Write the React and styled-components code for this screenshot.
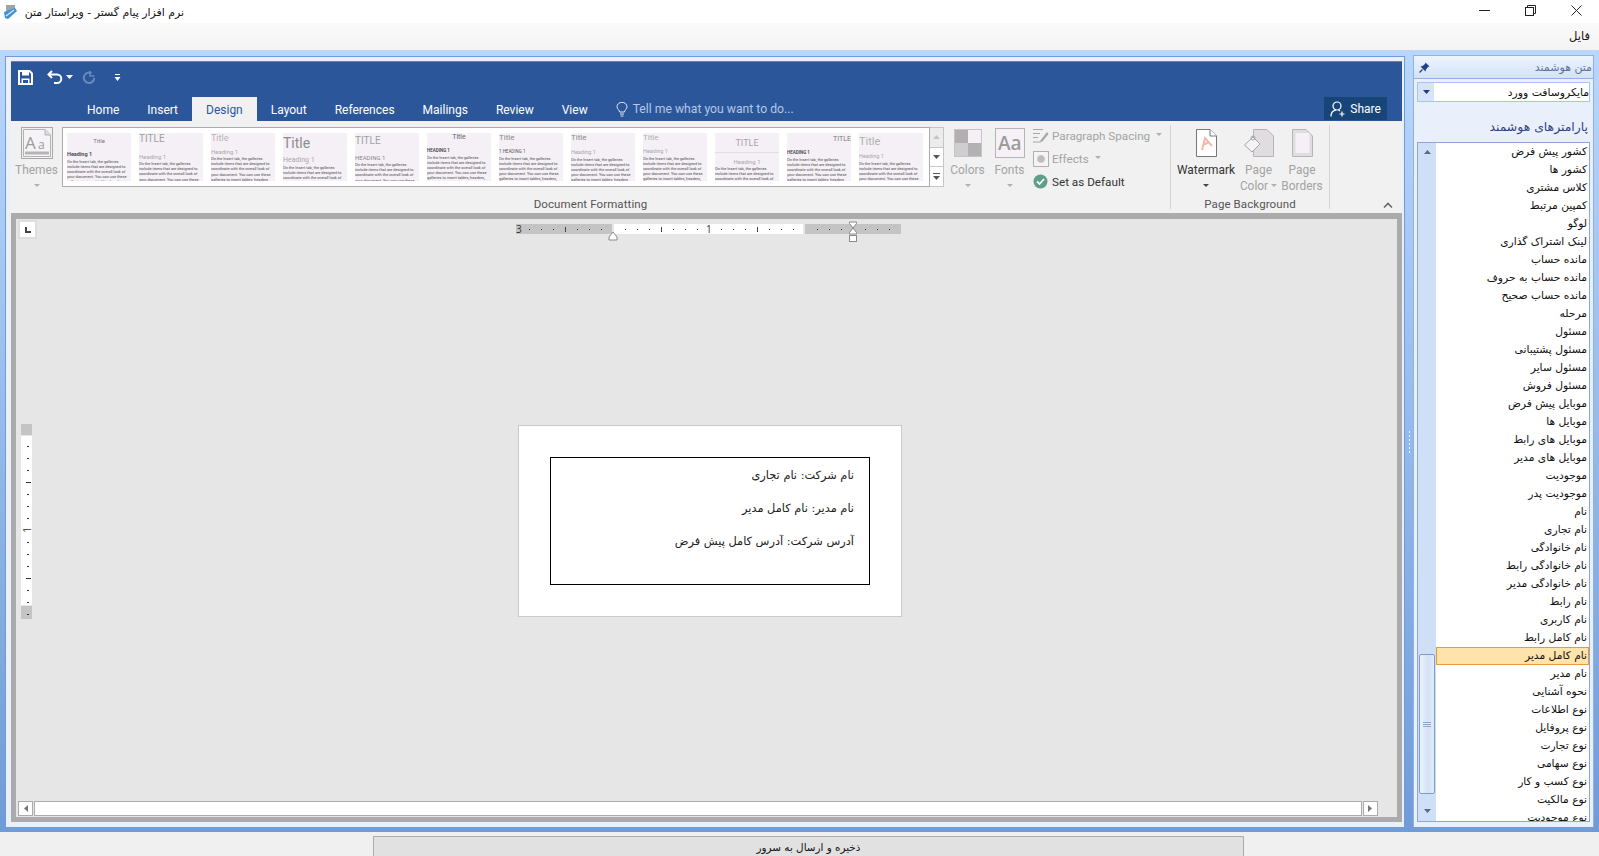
import React from 'react';
import styled, { createGlobalStyle } from 'styled-components';

const GlobalStyle = createGlobalStyle`
  html, body {
    margin: 0;
    padding: 0;
    height: 100%;
    overflow: hidden;
    background: #f0f0f0;
  }
  * { box-sizing: border-box; }
`;

const persian = `"DejaVu Sans", "Noto Sans", sans-serif`;
const ribbonFont = `Roboto, "Open Sans", sans-serif`;

const Shell = styled.div`
  width: 1599px;
  height: 856px;
  display: flex;
  flex-direction: column;
  overflow: hidden;
  font-family: ${persian};
`;

const TitleBar = styled.div`
  height: 23px;
  flex: none;
  background: #fff;
  display: flex;
  align-items: center;
  padding-left: 3px;
`;

const TitleText = styled.div`
  direction: rtl;
  font-size: 10.9px;
  padding-top: 1px;
  color: #111;
  margin-left: 6px;
  width: 160px;
  white-space: nowrap;
`;

const WindowButtons = styled.div`
  margin-left: auto;
  display: flex;
  height: 100%;
`;

const WindowButton = styled.div`
  width: 46px;
  display: flex;
  align-items: center;
  justify-content: center;
  padding-bottom: 2px;
`;

const MenuBar = styled.div`
  height: 27px;
  flex: none;
  background: linear-gradient(#fafafa, #f4f4f4);
  direction: rtl;
  font-size: 11.5px;
  color: #111;
  padding: 6px 9px 0 0;
`;

const Workspace = styled.div`
  height: 782px;
  flex: none;
  display: flex;
  padding: 6px 5px 5px 5px;
  background: linear-gradient(#b9d7fd, #6f9bd8);
`;

const EditorPanel = styled.div`
  width: 1401px;
  background: #e9f0fb;
  border: 1px solid #6f9bd8;
  border-bottom: none;
  padding: 4px 2px 5px 5px;
  display: flex;
  flex-direction: column;
`;

const Splitter = styled.div`
  width: 8px;
  display: flex;
  flex-direction: column;
  align-items: center;
  justify-content: center;
  gap: 2px;
`;

const GripDot = styled.span`
  width: 1px;
  height: 2px;
  background: #eaf2fd;
`;

const RibbonTop = styled.div`
  height: 60px;
  flex: none;
  background: #2b579a;
  border-top: 1px solid #7a7f8a;
  display: flex;
  flex-direction: column;
`;

const QuickAccess = styled.div`
  height: 35px;
  flex: none;
  display: flex;
  align-items: center;
  padding: 0 0 4px 7px;
`;

const QuickIcon = styled.div`
  display: flex;
  margin-left: ${(p) => p.$gap || 0}px;
`;

const TabRow = styled.div`
  flex: 1;
  display: flex;
  align-items: stretch;
  padding-left: 62px;
  font-family: ${ribbonFont};
`;

const Tab = styled.div`
  padding: 1px 14px 0;
  display: flex;
  align-items: center;
  font-size: 12px;
  color: ${(p) => (p.$active ? '#2b579a' : '#fff')};
  background: ${(p) => (p.$active ? '#f1f1f1' : 'transparent')};
`;

const TellMe = styled.div`
  display: flex;
  align-items: center;
  gap: 5px;
  margin-left: 14px;
  font-size: 12.2px;
  color: #b4c7e4;
`;

const ShareButton = styled.div`
  margin-left: auto;
  margin-right: 15px;
  width: 63px;
  height: 23px;
  align-self: flex-start;
  background: #174578;
  color: #fff;
  font-size: 12px;
  display: flex;
  align-items: center;
  justify-content: center;
  gap: 4px;
`;

const Ribbon = styled.div`
  height: 92px;
  flex: none;
  background: #f1f1f1;
  display: flex;
  font-family: ${ribbonFont};
`;

const Group = styled.div`
  width: ${(p) => p.$width}px;
  border-right: 1px solid #d4d4d4;
  margin: 4px 0 4px;
  display: flex;
  flex-direction: column;
`;

const GroupRow = styled.div`
  flex: 1;
  display: flex;
  padding-top: 2px;
  padding-left: ${(p) => p.$left || 0}px;
`;

const GroupLabel = styled.div`
  height: 15px;
  padding-top: 3px;
  line-height: 15px;
  text-align: center;
  font-size: 11.5px;
  letter-spacing: 0.1px;
  color: #555;
`;

const LargeButton = styled.div`
  width: ${(p) => p.$width}px;
  display: flex;
  flex-direction: column;
  align-items: center;
  color: ${(p) => (p.$on ? '#333' : '#a3a3a3')};
  font-size: 11.9px;
  line-height: 16px;
  text-align: center;
`;

const IconSlot = styled.div`
  height: 32px;
  margin-bottom: 3px;
  display: flex;
  align-items: center;
`;

const Caret = styled.span`
  width: 0;
  height: 0;
  margin-top: 6px;
  border-left: 3px solid transparent;
  border-right: 3px solid transparent;
  border-top: 3px solid ${(p) => (p.$on ? '#444' : '#b0b0b0')};
`;

const InlineCaret = styled(Caret)`
  display: inline-block;
  margin: 0 0 2px 3px;
  vertical-align: middle;
`;

const Gallery = styled.div`
  width: 868px;
  height: 60px;
  background: #fff;
  border: 1px solid #ababab;
  display: flex;
  gap: 8px;
  padding: 5px 0 0 4px;
`;

const Thumb = styled.div`
  width: 64px;
  height: 48px;
  flex: none;
  background: #f5f0f6;
  overflow: hidden;
  color: #9a9a9a;
`;

const ThumbTitle = styled.div`
  font-size: ${(p) => p.$size}px;
  line-height: ${(p) => p.$size + 2}px;
  margin-top: ${(p) => p.$top || 0}px;
  text-align: ${(p) => p.$align || 'left'};
  color: ${(p) => p.$color || '#a0a0a0'};
  border-bottom: ${(p) => (p.$rule ? '1px solid #e2dce4' : 'none')};
  padding-bottom: ${(p) => (p.$rule ? 3 : 0)}px;
  white-space: nowrap;
`;

const ThumbHeading = styled.div`
  font-size: ${(p) => p.$size}px;
  line-height: ${(p) => p.$size + 1}px;
  margin: ${(p) => p.$gap}px 0 1px;
  text-align: ${(p) => p.$align || 'left'};
  color: ${(p) => p.$color || '#a8a8a8'};
  font-weight: ${(p) => (p.$bold ? 600 : 400)};
  white-space: nowrap;
`;

const ThumbBody = styled.div`
  font-size: 3.9px;
  line-height: 5.2px;
  color: #4a4a4a;
`;

const GalleryScroll = styled.div`
  width: 14px;
  height: 60px;
  display: flex;
  flex-direction: column;
  border: 1px solid #c6c6c6;
  border-left: none;
`;

const GalleryStep = styled.div`
  flex: 1;
  background: ${(p) => (p.$off ? '#ececec' : '#fff')};
  border-bottom: ${(p) => (p.$last ? 'none' : '1px solid #c6c6c6')};
  display: flex;
  align-items: center;
  justify-content: center;
`;

const OptionColumn = styled.div`
  margin: -3px 0 0 4px;
  display: flex;
  flex-direction: column;
`;

const OptionRow = styled.div`
  height: 23px;
  display: flex;
  align-items: center;
  gap: 3px;
  font-size: 11.7px;
  white-space: nowrap;
  color: ${(p) => (p.$on ? '#333' : '#a3a3a3')};
`;

const OptionIcon = styled.span`
  width: 17px;
  display: flex;
  justify-content: center;
`;

const CollapseSlot = styled.div`
  flex: 1;
  display: flex;
  justify-content: flex-end;
  align-items: flex-end;
  padding: 0 9px 4px 0;
`;

const DocumentFrame = styled.div`
  flex: 1;
  border: 5px solid #ababab;
  border-top-width: 6px;
  background: #e6e6e6;
  display: flex;
  flex-direction: column;
`;

const RulerRow = styled.div`
  height: 30px;
  flex: none;
  display: flex;
  padding: 2px 0 0 4px;
`;

const TabSelector = styled.div`
  width: 15px;
  height: 15px;
  margin-top: 1px;
  background: #fff;
  box-shadow: 0 0 0 2px #dedede;
  display: flex;
  align-items: center;
  justify-content: center;
`;

const HorizontalRuler = styled.svg`
  margin-left: 481px;
  display: block;
`;

const CanvasRow = styled.div`
  flex: 1;
  display: flex;
  align-items: flex-start;
  padding: 175px 0 0 5px;
`;

const VerticalRuler = styled.svg`
  display: block;
  flex: none;
`;

const Page = styled.div`
  width: 384px;
  height: 192px;
  margin: 1px 0 0 486px;
  background: #fff;
  border: 1px solid #cacaca;
  padding: 31px 0 0 31px;
`;

const TextFrame = styled.div`
  width: 320px;
  height: 128px;
  border: 1px solid #000;
  direction: rtl;
  padding: 1px 15px 0 0;
  font-size: 11.35px;
  line-height: 33px;
  color: #222;
`;

const ScrollRow = styled.div`
  height: 15px;
  flex: none;
  margin-bottom: 1px;
  display: flex;
  gap: 1px;
  padding: 0 19px 0 2px;
`;

const ScrollArrow = styled.div`
  width: 15px;
  background: #fff;
  border: 1px solid #ababab;
  display: flex;
  align-items: center;
  justify-content: center;
`;

const ScrollTrack = styled.div`
  flex: 1;
  background: #fff;
  border: 1px solid #ababab;
`;

const SidePanel = styled.div`
  width: 181px;
  margin-top: -1px;
  background: #e9f0fb;
  border: 1px solid #8fb1e3;
  border-bottom: none;
  display: flex;
  flex-direction: column;
  padding-bottom: 5px;
`;

const SideHeader = styled.div`
  height: 23px;
  flex: none;
  background: linear-gradient(#eef4fd, #d3e2f7);
  border-bottom: 1px solid #8fb1e3;
  display: flex;
  align-items: center;
  justify-content: space-between;
  padding: 0 1px 0 5px;
  font-size: 11px;
  color: #5d6f9c;
`;

const Combo = styled.div`
  height: 20px;
  flex: none;
  margin: 3px 3px 0;
  background: #fff;
  border: 1px solid #a9c4ec;
  display: flex;
  align-items: center;
`;

const ComboButton = styled.div`
  width: 16px;
  height: 100%;
  background: #d6e4f8;
  display: flex;
  align-items: center;
  justify-content: center;
`;

const ComboText = styled.div`
  flex: 1;
  direction: rtl;
  font-size: 10.8px;
  color: #111;
`;

const ParamsTitle = styled.div`
  direction: rtl;
  height: 40px;
  flex: none;
  padding: 17px 5px 0 0;
  font-size: 12.4px;
  line-height: 16px;
  color: #2f3f86;
`;

const ListBox = styled.div`
  flex: 1;
  min-height: 0;
  margin: 0 3px;
  background: #fff;
  border: 1px solid #8ba7d2;
  display: flex;
  overflow: hidden;
`;

const ListScroll = styled.div`
  width: 18px;
  flex: none;
  background: #cfe0f6;
  display: flex;
  flex-direction: column;
  align-items: center;
`;

const ListArrow = styled.div`
  height: 18px;
  margin-top: ${(p) => p.$top || 0}px;
  display: flex;
  align-items: center;
  justify-content: center;
`;

const ListThumb = styled.div`
  width: 16px;
  height: 140px;
  flex: none;
  margin-top: ${(p) => p.$top}px;
  background: linear-gradient(90deg, #eaf2fd, #d3e2f7 60%, #e3edfb);
  border: 1px solid #7f9cc9;
  border-radius: 2px;
  display: flex;
  flex-direction: column;
  gap: 1px;
  align-items: center;
  justify-content: center;
`;

const ThumbLine = styled.span`
  width: 8px;
  height: 1px;
  background: #8ea8d0;
`;

const ListItems = styled.div`
  flex: 1;
  direction: rtl;
`;

const ListItem = styled.div`
  height: 18px;
  line-height: 17px;
  padding-right: 2px;
  font-size: 10.7px;
  white-space: nowrap;
  color: #111;
  background: ${(p) => (p.$selected ? '#fee3ab' : 'transparent')};
  box-shadow: ${(p) => (p.$selected ? 'inset 0 0 0 1px #f29536' : 'none')};
`;

const Footer = styled.div`
  height: 24px;
  flex: none;
  background: #f0f0f0;
  padding: 4px 0 0 373px;
`;

const SaveButton = styled.div`
  width: 871px;
  height: 20px;
  background: #e1e1e1;
  border: 1px solid #adadad;
  border-bottom: none;
  direction: rtl;
  text-align: center;
  font-size: 10.4px;
  line-height: 20px;
  color: #111;
`;

const SMART_PARAMS = [
  'کشور پیش فرض', 'کشور ها', 'کلاس مشتری', 'کمپین مرتبط', 'لوگو',
  'لینک اشتراک گذاری', 'مانده حساب', 'مانده حساب به حروف', 'مانده حساب صحیح',
  'مرحله', 'مسئول', 'مسئول پشتیبانی', 'مسئول سایر', 'مسئول فروش',
  'موبایل پیش فرض', 'موبایل ها', 'موبایل های رابط', 'موبایل های مدیر',
  'موجودیت', 'موجودیت پدر', 'نام', 'نام تجاری', 'نام خانوادگی',
  'نام خانوادگی رابط', 'نام خانوادگی مدیر', 'نام رابط', 'نام کاربری',
  'نام کامل رابط', 'نام کامل مدیر', 'نام مدیر', 'نحوه آشنایی', 'نوع اطلاعات',
  'نوع پروفایل', 'نوع تجارت', 'نوع سهامی', 'نوع کسب و کار', 'نوع مالکیت',
  'نوع موجودیت',
];

const TABS = ['Home', 'Insert', 'Design', 'Layout', 'References', 'Mailings', 'Review', 'View'];

const SAMPLE =
  'On the Insert tab, the galleries include items that are designed to coordinate with the overall look of your document. You can use these galleries to insert tables, headers, footers, lists, cover pages, and other document building blocks.';

const THEMES = [
  { title: 'Title', size: 6, align: 'center', top: 4, color: '#777', head: 'Heading 1', hSize: 5.5, hGap: 6, hColor: '#444', hBold: true },
  { title: 'TITLE', size: 10, head: 'Heading 1', hSize: 6, hGap: 8 },
  { title: 'Title', size: 9, color: '#b5b5b5', head: 'Heading 1', hSize: 6, hGap: 4 },
  { title: 'Title', size: 14, color: '#8c8c8c', top: 2, head: 'Heading 1', hSize: 7, hGap: 5 },
  { title: 'TITLE', size: 10, top: 2, head: 'HEADING 1', hSize: 6, hGap: 7, hColor: '#888' },
  { title: 'Title', size: 7, align: 'center', color: '#666', head: 'HEADING 1', hSize: 4.5, hGap: 6, hColor: '#444', hBold: true },
  { title: 'Title', size: 8, color: '#888', head: '1   HEADING 1', hSize: 4.5, hGap: 6, hColor: '#555' },
  { title: 'Title', size: 8, color: '#888', head: 'Heading 1', hSize: 5.5, hGap: 6 },
  { title: 'Title', size: 8, color: '#b0b0b0', head: 'Heading 1', hSize: 5.5, hGap: 5 },
  { title: 'TITLE', size: 9, align: 'center', color: '#a5a5a5', top: 5, rule: true, head: 'Heading 1', hSize: 6, hGap: 5, hAlign: 'center' },
  { title: 'TITLE', size: 7, align: 'right', color: '#777', top: 2, head: 'HEADING 1', hSize: 4.5, hGap: 6, hColor: '#444', hBold: true },
  { title: 'Title', size: 11, color: '#b0b0b0', top: 2, head: 'Heading 1', hSize: 5.5, hGap: 5 },
];

const ThemeThumb = ({ item }) => (
  <Thumb>
    <ThumbTitle $size={item.size} $top={item.top} $align={item.align} $color={item.color} $rule={item.rule}>
      {item.title}
    </ThumbTitle>
    <ThumbHeading
      $size={item.hSize}
      $gap={item.hGap}
      $align={item.hAlign}
      $color={item.hColor}
      $bold={item.hBold}
    >
      {item.head}
    </ThumbHeading>
    <ThumbBody>{SAMPLE}</ThumbBody>
  </Thumb>
);

const Tri = ({ dir = 'down', color = '#555', size = 7 }) => {
  const pts = {
    down: '0,1 7,1 3.5,5',
    up: '0,5 7,5 3.5,1',
    left: '6,0 6,7 2,3.5',
    right: '1,0 1,7 5,3.5',
  };
  return (
    <svg width={size} height={size} viewBox="0 0 7 7">
      <polygon points={pts[dir]} fill={color} />
    </svg>
  );
};

const AppIcon = () => (
  <svg width="15" height="16" viewBox="0 0 15 16">
    <rect x="3" y="1" width="9" height="6" fill="#9aa7a5" />
    <path d="M1 8 L12 4 L14 7 L5 15 L2 14 Z" fill="#3f8fd6" />
    <path d="M3 12 L11 6" stroke="#cfe8fb" strokeWidth="1.5" />
  </svg>
);

const SaveIcon = () => (
  <svg width="15" height="15" viewBox="0 0 15 15">
    <path d="M1 1 H11.5 L14 3.5 V14 H1 Z" fill="none" stroke="#fff" strokeWidth="2" />
    <rect x="4" y="2" width="7" height="3.5" fill="#fff" />
    <rect x="3.5" y="8.5" width="8" height="5" fill="#fff" />
    <rect x="5" y="10" width="5" height="3" fill="#2b579a" />
  </svg>
);

const UndoIcon = () => (
  <svg width="16" height="15" viewBox="0 0 16 15">
    <path d="M5 1 L1.5 4.5 L5 8" fill="none" stroke="#fff" strokeWidth="2" />
    <path d="M2 4.5 H10 A4 4 0 0 1 10 13 H7" fill="none" stroke="#fff" strokeWidth="2" />
  </svg>
);

const RedoIcon = () => (
  <svg width="14" height="14" viewBox="0 0 14 14">
    <path d="M9.5 2.2 A5.2 5.2 0 1 0 12.2 7" fill="none" stroke="#6b8bbb" strokeWidth="2" />
    <path d="M8 0 V5 H12.5" fill="none" stroke="#6b8bbb" strokeWidth="1.4" />
  </svg>
);

const CustomizeIcon = () => (
  <svg width="7" height="8" viewBox="0 0 7 8">
    <rect x="1" y="0" width="5" height="1" fill="#fff" />
    <polygon points="0.5,3 6.5,3 3.5,7" fill="#fff" />
  </svg>
);

const BulbIcon = () => (
  <svg width="12" height="15" viewBox="0 0 12 15">
    <path d="M3.5 10 C3.5 8 1 7 1 4.8 A5 4.5 0 0 1 11 4.8 C11 7 8.5 8 8.5 10 Z" fill="none" stroke="#dfe7f3" strokeWidth="1" />
    <path d="M4 12 H8 M4.6 14 H7.4" stroke="#dfe7f3" strokeWidth="1" />
  </svg>
);

const ShareIcon = () => (
  <svg width="16" height="16" viewBox="0 0 16 16">
    <circle cx="7" cy="5" r="4" fill="none" stroke="#fff" strokeWidth="1.2" />
    <path d="M1 15.5 C1 11.5 3.5 9.5 6 9.2 M8.5 9.2 L10 10" fill="none" stroke="#fff" strokeWidth="1.2" />
    <path d="M12 10.5 V15.5 M9.5 13 H14.5" stroke="#fff" strokeWidth="1.2" />
  </svg>
);

const ThemesIcon = () => (
  <svg width="32" height="32" viewBox="0 0 32 32">
    <rect x="0.5" y="0.5" width="31" height="31" fill="none" stroke="#a9a9a9" />
    <path d="M2.5 2.5 H24 L29.5 8 V29.5 H2.5 Z" fill="#f6f3f7" stroke="#b3b3b3" />
    <path d="M24 2.5 V8 H29.5" fill="#dcdcdc" stroke="#b3b3b3" />
    <text x="4" y="22" fontFamily="Open Sans, sans-serif" fontSize="17" fill="#9b9b9b">A</text>
    <text x="17" y="22" fontFamily="Open Sans, sans-serif" fontSize="12" fill="#9b9b9b">a</text>
    <rect x="4" y="24.5" width="24" height="3" fill="#b5b5b5" />
  </svg>
);

const ColorsIcon = () => (
  <svg width="28" height="28" viewBox="0 0 28 28">
    <rect width="28" height="28" fill="#fff" />
    <rect x="0.5" y="0.5" width="13.5" height="13.5" fill="#b2aeb2" />
    <rect x="14" y="0.5" width="13.5" height="13.5" fill="#f5f0f6" />
    <rect x="0.5" y="14" width="13.5" height="13.5" fill="#d0cdd0" />
    <rect x="14" y="14" width="13.5" height="13.5" fill="#b2b2b2" />
    <rect x="0.5" y="0.5" width="27" height="27" fill="none" stroke="#c4c4c4" />
  </svg>
);

const FontsIcon = () => (
  <svg width="30" height="30" viewBox="0 0 30 30">
    <rect x="0.5" y="0.5" width="29" height="29" fill="#f6f1f7" stroke="#b5b5b5" />
    <text x="3" y="22" fontFamily="Open Sans, sans-serif" fontSize="19" fontWeight="600" fill="#9c9c9c">Aa</text>
  </svg>
);

const SpacingIcon = () => (
  <svg width="17" height="16" viewBox="0 0 17 16">
    <path d="M1 1.5 H11 M1 5.5 H8 M1 9.5 H6 M1 14 H9" stroke="#a8a8a8" strokeWidth="1" />
    <path d="M8 13 L15 4 L16.5 6 L10 14 Z" fill="#a8a8a8" />
  </svg>
);

const EffectsIcon = () => (
  <svg width="16" height="16" viewBox="0 0 16 16">
    <rect x="0.5" y="0.5" width="15" height="15" fill="#f6f3f7" stroke="#b0b0b0" />
    <circle cx="8" cy="8" r="3.8" fill="#bdbdbd" />
  </svg>
);

const CheckIcon = () => (
  <svg width="15" height="15" viewBox="0 0 15 15">
    <circle cx="7.5" cy="7.5" r="7" fill="#5f9f8a" />
    <path d="M4 7.5 L6.5 10 L11 5" fill="none" stroke="#fff" strokeWidth="1.8" />
  </svg>
);

const WatermarkIcon = () => (
  <svg width="21" height="28" viewBox="0 0 21 28">
    <path d="M0.5 0.5 H14 L20.5 7 V27.5 H0.5 Z" fill="#fff" stroke="#777" />
    <path d="M14 0.5 V7 H20.5" fill="#fff" stroke="#777" />
    <path d="M6 21 L9 9 L16 17 M7.5 15.5 L12.5 13.5" fill="none" stroke="#f0b9ab" strokeWidth="2" />
  </svg>
);

const PageColorIcon = () => (
  <svg width="30" height="28" viewBox="0 0 30 28">
    <path d="M9.5 0.5 H23 L29.5 7 V27.5 H9.5 Z" fill="#e0dce0" stroke="#b5b5b5" />
    <path d="M0.5 16 L9 8 L16 15 L8 23 Z" fill="#f6f3f7" stroke="#a5a5a5" />
    <circle cx="9" cy="9" r="2" fill="none" stroke="#a5a5a5" />
  </svg>
);

const PageBordersIcon = () => (
  <svg width="21" height="28" viewBox="0 0 21 28">
    <path d="M0.5 0.5 H14 L20.5 7 V27.5 H0.5 Z" fill="#e0dce0" stroke="#b5b5b5" />
    <rect x="3.5" y="4" width="14" height="20" fill="#f5f0f6" />
  </svg>
);

const ChevronUp = () => (
  <svg width="10" height="7" viewBox="0 0 10 7">
    <path d="M1 5.5 L5 1.5 L9 5.5" fill="none" stroke="#666" strokeWidth="1.6" />
  </svg>
);

const PinIcon = () => (
  <svg width="11" height="11" viewBox="0 0 11 11">
    <path d="M6.5 0.5 L10.5 4.5 L9 5 L7 7.5 L6.5 9.5 L1.5 4.5 L3.5 4 L6 2 Z" fill="#233f86" />
    <path d="M3.5 7.5 L0.5 10.5" stroke="#233f86" strokeWidth="1.2" />
  </svg>
);

// horizontal ruler: ticks every 12px, long ones every 96px
const RulerH = () => {
  const ticks = [];
  for (let x = 13; x < 380; x += 12) {
    const abs = x + 516;
    if (abs === 517 || abs === 709 || abs === 613 || abs === 805 || abs === 853) continue;
    const long = abs === 565 || abs === 661 || abs === 757;
    ticks.push(
      <rect key={x} x={x} y={long ? 6 : 8} width="1" height={long ? 5 : 1} fill={long ? '#444' : '#333'} />
    );
  }
  return (
    <HorizontalRuler width="386" height="22" viewBox="0 0 386 22">
      <rect x="0" y="3" width="96" height="10" fill="#c4c4c4" />
      <rect x="98" y="3" width="189" height="10" fill="#fff" />
      <rect x="289" y="3" width="96" height="10" fill="#c4c4c4" />
      {ticks}
      <text x="0" y="12" fontFamily="Open Sans, sans-serif" fontSize="10" fill="#333">3</text>
      <text x="190" y="12" fontFamily="Open Sans, sans-serif" fontSize="10" fill="#333">1</text>
      <path d="M93 16 L97 11 L101 16 V19 H93 Z" fill="#fff" stroke="#8a8a8a" />
      <path d="M333.5 1 H340.5 V2.5 L337 7 L340.5 11.5 V13 H333.5 V11.5 L337 7 L333.5 2.5 Z" fill="#fff" stroke="#8a8a8a" />
      <rect x="333.5" y="14.5" width="7" height="6" fill="#fff" stroke="#8a8a8a" />
    </HorizontalRuler>
  );
};

const RulerV = () => {
  const ticks = [];
  for (let y = 22; y < 195; y += 12) {
    const abs = y + 424;
    if (abs === 530) continue;
    const long = abs === 482 || abs === 578;
    ticks.push(
      <rect key={y} x={long ? 5 : 6} y={y} width={long ? 5 : 2} height="1" fill="#333" />
    );
  }
  return (
    <VerticalRuler width="11" height="195" viewBox="0 0 11 195">
      <rect x="0" y="0" width="11" height="11" fill="#c4c4c4" />
      <rect x="0" y="12" width="11" height="169" fill="#fff" />
      <rect x="0" y="182" width="11" height="13" fill="#c4c4c4" />
      {ticks}
      <text transform="translate(10 106) rotate(-90)" textAnchor="middle" fontFamily="Open Sans, sans-serif" fontSize="10" fill="#333">1</text>
    </VerticalRuler>
  );
};

function App() {
  return (
    <>
      <GlobalStyle />
      <Shell>
        <TitleBar>
          <AppIcon />
          <TitleText>نرم افزار پیام گستر - ویراستار متن</TitleText>
          <WindowButtons>
            <WindowButton>
              <svg width="11" height="11" viewBox="0 0 11 11"><path d="M0 5.5 H11" stroke="#222" /></svg>
            </WindowButton>
            <WindowButton>
              <svg width="11" height="11" viewBox="0 0 11 11" fill="none" stroke="#222">
                <rect x="0.5" y="2.5" width="8" height="8" />
                <path d="M2.5 2.5 V0.5 H10.5 V8.5 H8.5" />
              </svg>
            </WindowButton>
            <WindowButton>
              <svg width="11" height="11" viewBox="0 0 11 11"><path d="M0.5 0.5 L10.5 10.5 M10.5 0.5 L0.5 10.5" stroke="#222" /></svg>
            </WindowButton>
          </WindowButtons>
        </TitleBar>
        <MenuBar>فایل</MenuBar>
        <Workspace>
          <EditorPanel>
            <RibbonTop>
              <QuickAccess>
                <QuickIcon><SaveIcon /></QuickIcon>
                <QuickIcon $gap={14}><UndoIcon /></QuickIcon>
                <QuickIcon $gap={3}><Tri color="#fff" /></QuickIcon>
                <QuickIcon $gap={9}><RedoIcon /></QuickIcon>
                <QuickIcon $gap={18}><CustomizeIcon /></QuickIcon>
              </QuickAccess>
              <TabRow>
                {TABS.map((tab) => (
                  <Tab key={tab} $active={tab === 'Design'}>{tab}</Tab>
                ))}
                <TellMe>
                  <BulbIcon />
                  Tell me what you want to do...
                </TellMe>
                <ShareButton>
                  <ShareIcon />
                  Share
                </ShareButton>
              </TabRow>
            </RibbonTop>
            <Ribbon>
              <Group $width={1160}>
                <GroupRow>
                  <LargeButton $width={51}>
                    <IconSlot><ThemesIcon /></IconSlot>
                    Themes
                    <Caret />
                  </LargeButton>
                  <Gallery>
                    {THEMES.map((item, i) => (
                      <ThemeThumb key={i} item={item} />
                    ))}
                  </Gallery>
                  <GalleryScroll>
                    <GalleryStep $off><Tri dir="up" color="#c6c6c6" /></GalleryStep>
                    <GalleryStep><Tri color="#555" /></GalleryStep>
                    <GalleryStep $last>
                      <svg width="7" height="8" viewBox="0 0 7 8">
                        <rect y="0" width="7" height="1" fill="#555" />
                        <polygon points="0,3 7,3 3.5,7" fill="#555" />
                      </svg>
                    </GalleryStep>
                  </GalleryScroll>
                  <LargeButton $width={47}>
                    <IconSlot><ColorsIcon /></IconSlot>
                    Colors
                    <Caret />
                  </LargeButton>
                  <LargeButton $width={37}>
                    <IconSlot><FontsIcon /></IconSlot>
                    Fonts
                    <Caret />
                  </LargeButton>
                  <OptionColumn>
                    <OptionRow><OptionIcon><SpacingIcon /></OptionIcon>Paragraph Spacing<InlineCaret /></OptionRow>
                    <OptionRow><OptionIcon><EffectsIcon /></OptionIcon>Effects<InlineCaret /></OptionRow>
                    <OptionRow $on><OptionIcon><CheckIcon /></OptionIcon>Set as Default</OptionRow>
                  </OptionColumn>
                </GroupRow>
                <GroupLabel>Document Formatting</GroupLabel>
              </Group>
              <Group $width={159}>
                <GroupRow $left={5}>
                  <LargeButton $width={60} $on>
                    <IconSlot><WatermarkIcon /></IconSlot>
                    Watermark
                    <Caret $on />
                  </LargeButton>
                  <LargeButton $width={45}>
                    <IconSlot><PageColorIcon /></IconSlot>
                    Page
                    <span>Color<InlineCaret /></span>
                  </LargeButton>
                  <LargeButton $width={42}>
                    <IconSlot><PageBordersIcon /></IconSlot>
                    Page
                    <span>Borders</span>
                  </LargeButton>
                </GroupRow>
                <GroupLabel>Page Background</GroupLabel>
              </Group>
              <CollapseSlot><ChevronUp /></CollapseSlot>
            </Ribbon>
            <DocumentFrame>
              <RulerRow>
                <TabSelector>
                  <svg width="6" height="6" viewBox="0 0 6 6"><path d="M1 0 V5 H6" fill="none" stroke="#444" strokeWidth="2" /></svg>
                </TabSelector>
                <RulerH />
              </RulerRow>
              <CanvasRow>
                <RulerV />
                <Page>
                  <TextFrame>
                    <div>نام شرکت: نام تجاری</div>
                    <div>نام مدیر: نام کامل مدیر</div>
                    <div>آدرس شرکت: آدرس کامل پیش فرض</div>
                  </TextFrame>
                </Page>
              </CanvasRow>
              <ScrollRow>
                <ScrollArrow><Tri dir="left" color="#777" /></ScrollArrow>
                <ScrollTrack />
                <ScrollArrow><Tri dir="right" color="#777" /></ScrollArrow>
              </ScrollRow>
            </DocumentFrame>
          </EditorPanel>
          <Splitter>
            {Array.from({ length: 6 }).map((_, i) => <GripDot key={i} />)}
          </Splitter>
          <SidePanel>
            <SideHeader>
              <PinIcon />
              <span dir="rtl">متن هوشمند</span>
            </SideHeader>
            <Combo>
              <ComboButton><Tri color="#26397a" /></ComboButton>
              <ComboText>مایکروسافت وورد</ComboText>
            </Combo>
            <ParamsTitle>پارامترهای هوشمند</ParamsTitle>
            <ListBox>
              <ListScroll>
                <ListArrow><Tri dir="up" color="#5a6a84" /></ListArrow>
                <ListThumb $top={493}>
                  <ThumbLine />
                  <ThumbLine />
                  <ThumbLine />
                </ListThumb>
                <ListArrow $top={8}><Tri color="#5a6a84" /></ListArrow>
              </ListScroll>
              <ListItems>
                {SMART_PARAMS.map((name) => (
                  <ListItem key={name} $selected={name === 'نام کامل مدیر'}>{name}</ListItem>
                ))}
              </ListItems>
            </ListBox>
          </SidePanel>
        </Workspace>
        <Footer>
          <SaveButton>ذخیره و ارسال به سرور</SaveButton>
        </Footer>
      </Shell>
    </>
  );
}

export default App;
